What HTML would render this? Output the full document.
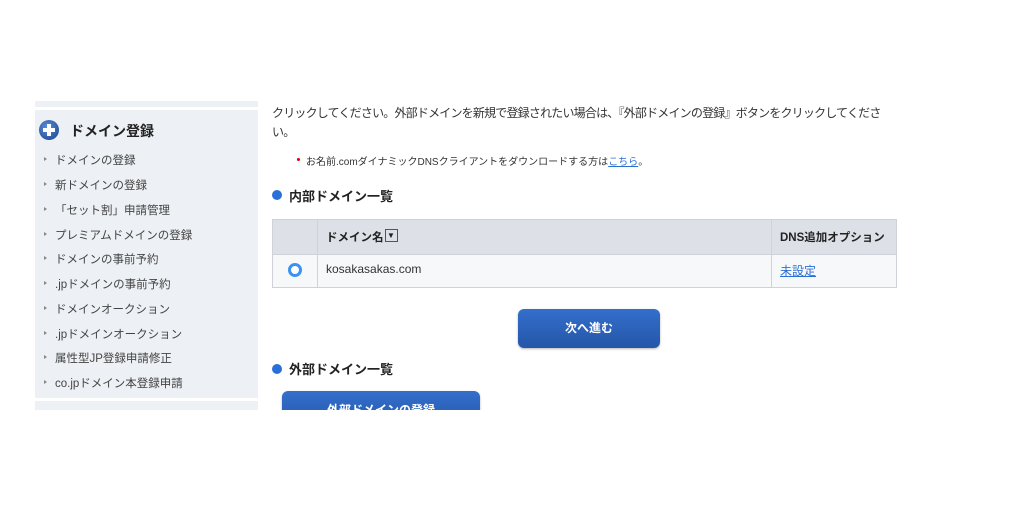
<!DOCTYPE html>
<html><head><meta charset="utf-8"><style>
body{margin:0;width:1024px;height:512px;background:#fff;position:relative;overflow:hidden;font-family:"Liberation Sans","Noto Sans CJK JP",sans-serif;color:#333}
.a{position:absolute}
.side{left:35px;width:223px;background:#edf0f4}
.item{position:absolute;left:44px;font-size:11.5px;color:#444}
.item:before{content:"";position:absolute;left:0;top:5px;border-left:3px solid #888;border-top:2px solid transparent;border-bottom:2px solid transparent}
.item span{margin-left:11px}
.clip{position:absolute;left:0;top:0;width:1024px;height:410px;overflow:hidden}
.btn{background:linear-gradient(#336fcc,#2556a8);border-radius:6px;color:#fff;font-weight:bold;font-size:12px;text-align:center;box-shadow:0 1px 2px rgba(0,0,0,.3)}
.dot{width:10px;height:10px;border-radius:50%;background:#2a6fd6}
</style></head><body>
<div class="clip">
<div class="a side" style="top:101px;height:6px"></div>
<div class="a side" style="top:110px;height:288px"></div>
<div class="a side" style="top:401px;height:20px"></div>
<div class="a" style="left:39px;top:120px;width:20px;height:20px;border-radius:50%;background:radial-gradient(circle at 40% 35%,#5a8fd8,#1a3f8a);"></div>
<div class="a" style="left:47px;top:124px;width:4px;height:12px;background:#fff"></div>
<div class="a" style="left:43px;top:128px;width:12px;height:4px;background:#fff"></div>
<div class="a" style="left:70px;top:121px;font-size:14px;font-weight:bold;color:#222">ドメイン登録</div>
<div class="item" style="top:152px"><span>ドメインの登録</span></div>
<div class="item" style="top:177px"><span>新ドメインの登録</span></div>
<div class="item" style="top:202px"><span>「セット割」申請管理</span></div>
<div class="item" style="top:227px"><span>プレミアムドメインの登録</span></div>
<div class="item" style="top:251px"><span>ドメインの事前予約</span></div>
<div class="item" style="top:276px"><span>.jpドメインの事前予約</span></div>
<div class="item" style="top:301px"><span>ドメインオークション</span></div>
<div class="item" style="top:326px"><span>.jpドメインオークション</span></div>
<div class="item" style="top:350px"><span>属性型JP登録申請修正</span></div>
<div class="item" style="top:375px"><span>co.jpドメイン本登録申請</span></div>

<div class="a" style="left:272px;top:104px;white-space:nowrap;font-size:12px;line-height:19px;letter-spacing:-0.8px;color:#333">クリックしてください。外部ドメインを新規で登録されたい場合は、『外部ドメインの登録』ボタンをクリックしてくださ<br>い。</div>
<div class="a" style="left:297px;top:158px;width:3px;height:3px;border-radius:50%;background:#d00"></div>
<div class="a" style="left:306px;top:153px;font-size:10px;color:#333">お名前.comダイナミックDNSクライアントをダウンロードする方は<span style="color:#2a6fd6;text-decoration:underline">こちら</span>。</div>
<div class="a dot" style="left:272px;top:190px"></div>
<div class="a" style="left:289px;top:186px;font-size:13px;font-weight:bold;color:#222">内部ドメイン一覧</div>

<div class="a" style="left:272px;top:219px;width:623px;height:67px;border:1px solid #cfd3d9;background:#f7f8fa"></div>
<div class="a" style="left:273px;top:220px;width:623px;height:34px;background:#dde1e7;border-bottom:1px solid #cfd3d9"></div>
<div class="a" style="left:317px;top:220px;width:1px;height:67px;background:#cfd3d9"></div>
<div class="a" style="left:771px;top:220px;width:1px;height:67px;background:#cfd3d9"></div>
<div class="a" style="left:326px;top:229px;font-size:11.5px;font-weight:bold;color:#222">ドメイン名<span style="display:inline-block;width:11px;height:11px;border:1px solid #555;font-size:8px;line-height:11px;text-align:center;vertical-align:top;margin-left:1px">▼</span></div>
<div class="a" style="left:780px;top:229px;font-size:11.5px;font-weight:bold;color:#222">DNS追加オプション</div>
<div class="a" style="left:288px;top:263px;width:8px;height:8px;border-radius:50%;border:3px solid #3a93f0;background:#fff"></div>
<div class="a" style="left:326px;top:262px;font-size:12px;color:#333">kosakasakas.com</div>
<div class="a" style="left:780px;top:262px;font-size:12px;color:#2a6fd6;text-decoration:underline">未設定</div>

<div class="a btn" style="left:518px;top:309px;width:142px;height:39px;line-height:39px">次へ進む</div>
<div class="a dot" style="left:272px;top:364px"></div>
<div class="a" style="left:289px;top:359px;font-size:13px;font-weight:bold;color:#222">外部ドメイン一覧</div>
<div class="a btn" style="left:282px;top:391px;width:198px;height:39px;line-height:39px">外部ドメインの登録</div>
</div>
</body></html>
